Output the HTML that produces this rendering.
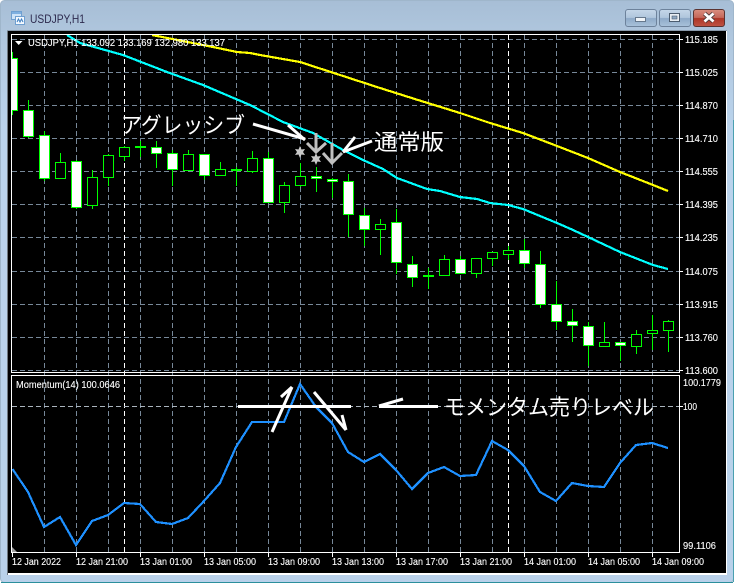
<!DOCTYPE html>
<html><head><meta charset="utf-8"><style>
html,body{margin:0;padding:0;background:#fff;width:737px;height:583px;overflow:hidden}
svg{display:block;position:absolute;left:0;top:0}
text{font-family:"Liberation Sans","Noto Sans CJK JP",sans-serif;fill:#fff;font-size:10.5px;stroke:#fff;stroke-width:.12}
.jp{font-size:22px;font-family:"Liberation Sans","Noto Sans CJK JP",sans-serif;stroke:none}
.g{stroke:#778899;stroke-width:1;stroke-dasharray:5 3;fill:none}
.w{stroke:#fff;stroke-width:1;stroke-dasharray:5 3;fill:none}
.wick{stroke:#00ff00;stroke-width:1;fill:none}
.b{stroke:#00ff00;stroke-width:1;fill:#fff}
.h{stroke:#00ff00;stroke-width:1;fill:#000}
</style></head><body>
<svg width="737" height="583" viewBox="0 0 737 583" xmlns="http://www.w3.org/2000/svg">
<defs>
<linearGradient id="fr" x1="0" y1="0" x2="0" y2="1"><stop offset="0" stop-color="#a7bed6"/><stop offset=".08" stop-color="#b2c9e0"/><stop offset=".22" stop-color="#bad3ec"/><stop offset="1" stop-color="#b9d1ea"/></linearGradient>
<linearGradient id="btn" x1="0" y1="0" x2="0" y2="1"><stop offset="0" stop-color="#c5d7e9"/><stop offset=".48" stop-color="#afc5dc"/><stop offset=".52" stop-color="#8eaac8"/><stop offset="1" stop-color="#a9c2da"/></linearGradient>
<linearGradient id="cl" x1="0" y1="0" x2="0" y2="1"><stop offset="0" stop-color="#d98f80"/><stop offset=".48" stop-color="#c4675a"/><stop offset=".52" stop-color="#ad3526"/><stop offset="1" stop-color="#bf5444"/></linearGradient>
</defs>
<!-- window frame -->
<rect x="0.5" y="0.5" width="733" height="582" rx="4" fill="url(#fr)" stroke="#9fb6cb"/>
<path d="M1 582.5H733" stroke="#2b8f9c"/>
<path d="M733.5 120V582" stroke="#4aa0b0"/>
<!-- client -->
<rect x="7" y="31" width="720" height="544" fill="#fff"/>
<rect x="7" y="30" width="720" height="1" fill="#8a9aab"/>
<rect x="7" y="31" width="1" height="544" fill="#6f7880"/>
<rect x="8" y="31" width="718" height="542" fill="#000"/>

<!-- title -->
<g>
<rect x="11.5" y="11.5" width="10" height="8" fill="#cfe3f7" stroke="#6f9fd0"/>
<rect x="15.5" y="16.5" width="9" height="8" fill="#f4f9ff" stroke="#6f9fd0"/>
<rect x="12" y="12" width="9" height="2" fill="#7fb0e0"/>
<path d="M17 22l1.5-3 1.5 3 1.5-3 1.5 3" stroke="#3f7fc0" fill="none"/>
</g>
<text x="30" y="23" textLength="55" lengthAdjust="spacingAndGlyphs" style="font-size:12px;fill:#2d2a4e;stroke:none">USDJPY,H1</text>

<!-- buttons -->
<rect x="625.5" y="9.5" width="31" height="17" rx="2.5" fill="url(#btn)" stroke="#6d829b"/>
<rect x="635.5" y="17.5" width="10" height="4" fill="#f0f4f8" stroke="#66788c"/>
<rect x="659.5" y="9.5" width="31" height="17" rx="2.5" fill="url(#btn)" stroke="#6d829b"/>
<rect x="669.5" y="13.5" width="10" height="8" fill="#e8eef4" stroke="#4c5d70"/>
<rect x="672" y="16" width="5" height="3" fill="#8fa8c2" stroke="#4c5d70" stroke-width=".6"/>
<rect x="693.5" y="9.5" width="31" height="17" rx="2.5" fill="url(#cl)" stroke="#5b3331"/>
<path d="M704.5 13.5l9 8M713.5 13.5l-9 8" stroke="#4a3a3a" stroke-width="4.5"/>
<path d="M704.5 13.5l9 8M713.5 13.5l-9 8" stroke="#fff" stroke-width="2.8"/>

<!-- grid -->
<g shape-rendering="crispEdges">
<path class="g" d="M12 39.5H679M12 72.5H679M12 105.5H679M12 138.5H679M12 171.5H679M12 204.5H679M12 237.5H679M12 271.5H679M12 304.5H679M12 337.5H679M12 370.5H679"/>
<path class="g" d="M44.5 35V552M76.5 35V552M108.5 35V552M140.5 35V552M172.5 35V552M204.5 35V552M236.5 35V552M268.5 35V552M300.5 35V552M332.5 35V552M364.5 35V552M396.5 35V552M428.5 35V552M460.5 35V552M492.5 35V552M524.5 35V552M556.5 35V552M588.5 35V552M620.5 35V552M652.5 35V552"/>
<path class="w" d="M124.5 35V552M508.5 35V552"/>
<path d="M12 406.5H679" stroke="#aab4bd" stroke-dasharray="5 3"/>
</g>

<!-- candles -->
<g shape-rendering="crispEdges">
<path class="wick" d="M12.5 52V115M28.5 100V138M44.5 131V181M60.5 153V179M76.5 160V209M92.5 170V209M108.5 154V186M124.5 146V161M140.5 141V157M156.5 141V168M172.5 150V186M188.5 150V170M204.5 154V180M220.5 162V175M236.5 167V186M252.5 151V173M268.5 152V202M284.5 182V213M300.5 163V187M316.5 167V192M332.5 178V198M348.5 174V237M364.5 208V246M380.5 219V255M396.5 209V274M412.5 256V287M428.5 268V289M444.5 255V275M460.5 256V273M476.5 258V278M492.5 252V266M508.5 246V260M524.5 239V268M540.5 251V308M556.5 281V330M572.5 309V342M588.5 322V366M604.5 322V346M620.5 342V361M636.5 330V354M652.5 315V350M668.5 320V352"/>
<rect class="b" x="11.5" y="58.5" width="6" height="52"/>
<rect class="b" x="23.5" y="110.5" width="10" height="26"/>
<rect class="b" x="39.5" y="135.5" width="10" height="43"/>
<rect class="h" x="55.5" y="162.5" width="10" height="16"/>
<rect class="b" x="71.5" y="161.5" width="10" height="46"/>
<rect class="h" x="87.5" y="177.5" width="10" height="28"/>
<rect class="h" x="103.5" y="155.5" width="10" height="22"/>
<rect class="h" x="119.5" y="147.5" width="10" height="9"/>
<rect x="135" y="146" width="11" height="2" fill="#00ff00"/>
<rect class="b" x="151.5" y="147.5" width="10" height="6"/>
<rect class="b" x="167.5" y="153.5" width="10" height="16"/>
<rect class="h" x="183.5" y="154.5" width="10" height="16"/>
<rect class="b" x="199.5" y="154.5" width="10" height="21"/>
<rect class="h" x="215.5" y="169.5" width="10" height="6"/>
<rect x="231" y="169" width="11" height="2" fill="#00ff00"/>
<rect class="h" x="247.5" y="158.5" width="10" height="13"/>
<rect class="b" x="263.5" y="158.5" width="10" height="44"/>
<rect class="h" x="279.5" y="185.5" width="10" height="17"/>
<rect class="h" x="295.5" y="176.5" width="10" height="9"/>
<rect class="b" x="311.5" y="176.5" width="10" height="2"/>
<rect class="b" x="327.5" y="179.5" width="10" height="2"/>
<rect class="b" x="343.5" y="181.5" width="10" height="33"/>
<rect class="b" x="359.5" y="215.5" width="10" height="14"/>
<rect class="h" x="375.5" y="224.5" width="10" height="5"/>
<rect class="b" x="391.5" y="222.5" width="10" height="40"/>
<rect class="b" x="407.5" y="264.5" width="10" height="13"/>
<rect x="423" y="275" width="11" height="2" fill="#00ff00"/>
<rect class="h" x="439.5" y="259.5" width="10" height="16"/>
<rect class="b" x="455.5" y="259.5" width="10" height="14"/>
<rect class="h" x="471.5" y="258.5" width="10" height="15"/>
<rect class="h" x="487.5" y="252.5" width="10" height="6"/>
<rect class="h" x="503.5" y="250.5" width="10" height="4"/>
<rect class="b" x="519.5" y="250.5" width="10" height="13"/>
<rect class="b" x="535.5" y="264.5" width="10" height="40"/>
<rect class="b" x="551.5" y="304.5" width="10" height="17"/>
<rect class="b" x="567.5" y="321.5" width="10" height="4"/>
<rect class="b" x="583.5" y="326.5" width="10" height="19"/>
<rect class="h" x="599.5" y="342.5" width="10" height="4"/>
<rect class="b" x="615.5" y="342.5" width="10" height="3"/>
<rect class="h" x="631.5" y="334.5" width="10" height="12"/>
<rect class="h" x="647.5" y="330.5" width="10" height="3"/>
<rect class="h" x="663.5" y="321.5" width="10" height="9"/>
</g>

<!-- MAs -->
<path fill="none" stroke="#ffff00" stroke-width="2.2" shape-rendering="crispEdges" d="M152 35L213 47 237 52 250 53 260 55 300 62 340 75 380 88 418 100 460 113 490 123 523 133 557 146 588 158 620 172 653 185 668 191"/>
<path fill="none" stroke="#00ffff" stroke-width="2.2" shape-rendering="crispEdges" d="M67 35L80 43 123 55 167 72 203 85 250 105 283 122 313 133 343 150 363 160 383 169 397 178 427 189 440 191 460 197 477 199 490 203 508 205 523 209 557 223 573 230 588 237 620 252 653 265 668 269"/>

<!-- gray arrows and stars -->
<g fill="none" stroke="#c0c0c0" stroke-width="3">
<path d="M316 133V152M307 143L316 152 326 143"/>
<path d="M332 143V163M323 153L332 163 342 153"/>
</g>
<polygon fill="#c8c8c8" points="300,146 301.5,149.5 305,149 303,152 305,155 301.5,154.5 300,158 298.5,154.5 295,155 297,152 295,149 298.5,149.5"/>
<polygon fill="#c8c8c8" points="316,153 317.5,156.5 321,156 319,159 321,162 317.5,161.5 316,165 314.5,161.5 311,162 313,159 311,156 314.5,156.5"/>

<!-- annotation arrows top -->
<g fill="none" stroke="#fff" stroke-width="3">
<path d="M253 124L305 139"/><path d="M288 125L305 140"/>
<path d="M372 141L343 152"/><path d="M355 137L343 152"/>
</g>

<!-- momentum -->
<path fill="none" stroke="#1e90ff" stroke-width="2.2" shape-rendering="crispEdges" d="M12.5 469L28 492 44 527 60 517 76 545 92 521 108 515 124 503 140 504 156 522 172 524 188 518 204 501 220 483 236 447 252 422 284 422 300 384 316 407 332 423 348 452 364 462 380 454 396 470 412 489 428 473 444 467 460 476 476 475 492 441 508 450 524 466 540 492 556 501 572 483 588 486 604 487 620 463 636 445 652 443 668 448"/>
<g fill="none" stroke="#fff" stroke-width="3">
<path d="M238 406.5H351M379 406.5H438"/>
<path d="M272 432L292 387M281 397L292 387"/>
<path d="M314 392L346 430M342 415L346 430"/>
<path d="M379 406L403 399"/>
</g>
<polygon points="12,547 17,552 12,552" fill="#a0a0a0"/>

<!-- borders -->
<g shape-rendering="crispEdges" fill="none" stroke="#fff">
<path d="M11.5 34.5H679.5V372.5H11.5ZM11.5 375.5H679.5V552.5H11.5Z"/>
<path d="M679 39.5h4M679 72.5h4M679 105.5h4M679 138.5h4M679 171.5h4M679 204.5h4M679 237.5h4M679 271.5h4M679 304.5h4M679 337.5h4M679 370.5h4M679 406.5h4"/>
<path d="M12.5 552v5M76.5 552v5M140.5 552v5M204.5 552v5M268.5 552v5M332.5 552v5M396.5 552v5M460.5 552v5M524.5 552v5M588.5 552v5M652.5 552v5"/>
</g>

<!-- header -->
<polygon points="15,41 22.5,41 18.7,45" fill="#fff"/>
<text x="28" y="46" textLength="197" lengthAdjust="spacingAndGlyphs">USDJPY,H1 133.092 133.169 132.980 133.137</text>
<text x="16" y="388" textLength="104" lengthAdjust="spacingAndGlyphs">Momentum(14) 100.0646</text>

<!-- right axis -->
<g>
<text x="685" y="43" textLength="33" lengthAdjust="spacingAndGlyphs">115.185</text>
<text x="685" y="76" textLength="33" lengthAdjust="spacingAndGlyphs">115.025</text>
<text x="685" y="109" textLength="33" lengthAdjust="spacingAndGlyphs">114.870</text>
<text x="685" y="142" textLength="33" lengthAdjust="spacingAndGlyphs">114.710</text>
<text x="685" y="175" textLength="33" lengthAdjust="spacingAndGlyphs">114.555</text>
<text x="685" y="208" textLength="33" lengthAdjust="spacingAndGlyphs">114.395</text>
<text x="685" y="241" textLength="33" lengthAdjust="spacingAndGlyphs">114.235</text>
<text x="685" y="275" textLength="33" lengthAdjust="spacingAndGlyphs">114.075</text>
<text x="685" y="308" textLength="33" lengthAdjust="spacingAndGlyphs">113.915</text>
<text x="685" y="341" textLength="33" lengthAdjust="spacingAndGlyphs">113.760</text>
<text x="685" y="374" textLength="33" lengthAdjust="spacingAndGlyphs">113.600</text>
<text x="683" y="386" textLength="38" lengthAdjust="spacingAndGlyphs">100.1779</text>
<text x="683" y="410" textLength="14" lengthAdjust="spacingAndGlyphs">100</text>
<text x="683" y="549" textLength="33" lengthAdjust="spacingAndGlyphs">99.1106</text>
</g>

<!-- time axis -->
<g>
<text x="12" y="565" textLength="49" lengthAdjust="spacingAndGlyphs">12 Jan 2022</text>
<text x="76" y="565" textLength="52" lengthAdjust="spacingAndGlyphs">12 Jan 21:00</text>
<text x="140" y="565" textLength="52" lengthAdjust="spacingAndGlyphs">13 Jan 01:00</text>
<text x="204" y="565" textLength="52" lengthAdjust="spacingAndGlyphs">13 Jan 05:00</text>
<text x="268" y="565" textLength="52" lengthAdjust="spacingAndGlyphs">13 Jan 09:00</text>
<text x="332" y="565" textLength="52" lengthAdjust="spacingAndGlyphs">13 Jan 13:00</text>
<text x="396" y="565" textLength="52" lengthAdjust="spacingAndGlyphs">13 Jan 17:00</text>
<text x="460" y="565" textLength="52" lengthAdjust="spacingAndGlyphs">13 Jan 21:00</text>
<text x="524" y="565" textLength="52" lengthAdjust="spacingAndGlyphs">14 Jan 01:00</text>
<text x="588" y="565" textLength="52" lengthAdjust="spacingAndGlyphs">14 Jan 05:00</text>
<text x="652" y="565" textLength="52" lengthAdjust="spacingAndGlyphs">14 Jan 09:00</text>
</g>

<!-- japanese labels -->
<text class="jp" x="121" y="133" textLength="124" lengthAdjust="spacingAndGlyphs">アグレッシブ</text>
<text class="jp" x="374" y="150" textLength="70" lengthAdjust="spacingAndGlyphs">通常版</text>
<text class="jp" x="444" y="415" textLength="210" lengthAdjust="spacingAndGlyphs">モメンタム売りレベル</text>
</svg>
</body></html>
